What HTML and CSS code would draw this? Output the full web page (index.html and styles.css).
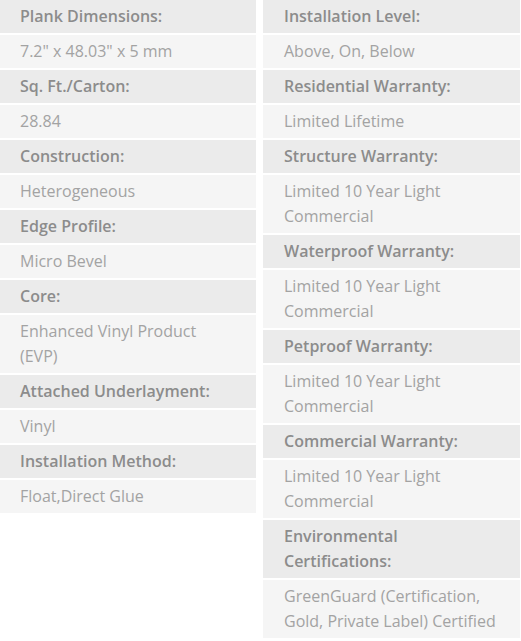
FILE: index.html
```html
<!DOCTYPE html>
<html>
<head>
<meta charset="utf-8">
<link rel="stylesheet" href="styles.css">
</head>
<body>
<div class="specs">
  <div class="col">
    <div class="row label">Plank Dimensions:</div>
    <div class="row value">7.2" x 48.03" x 5 mm</div>
    <div class="row label">Sq. Ft./Carton:</div>
    <div class="row value">28.84</div>
    <div class="row label">Construction:</div>
    <div class="row value">Heterogeneous</div>
    <div class="row label">Edge Profile:</div>
    <div class="row value">Micro Bevel</div>
    <div class="row label">Core:</div>
    <div class="row value">Enhanced Vinyl Product (EVP)</div>
    <div class="row label">Attached Underlayment:</div>
    <div class="row value">Vinyl</div>
    <div class="row label">Installation Method:</div>
    <div class="row value">Float,Direct Glue</div>
  </div>
  <div class="col">
    <div class="row label">Installation Level:</div>
    <div class="row value">Above, On, Below</div>
    <div class="row label">Residential Warranty:</div>
    <div class="row value">Limited Lifetime</div>
    <div class="row label">Structure Warranty:</div>
    <div class="row value">Limited 10 Year Light Commercial</div>
    <div class="row label">Waterproof Warranty:</div>
    <div class="row value">Limited 10 Year Light Commercial</div>
    <div class="row label">Petproof Warranty:</div>
    <div class="row value">Limited 10 Year Light Commercial</div>
    <div class="row label">Commercial Warranty:</div>
    <div class="row value">Limited 10 Year Light Commercial</div>
    <div class="row label">Environmental Certifications:</div>
    <div class="row value">GreenGuard (Certification, Gold, Private Label) Certified</div>
  </div>
</div>
</body>
</html>
```

FILE: styles.css
```css
html, body {
  margin: 0;
  padding: 0;
  background: #ffffff;
}
.specs {
  display: flex;
  gap: 7px;
  align-items: flex-start;
  width: 521px;
  font-family: "Open Sans", "Liberation Sans", sans-serif;
  font-size: 16px;
  line-height: 25px;
}
.col {
  width: 257px;
  display: flex;
  flex-direction: column;
  gap: 2px;
}
.col:first-child {
  width: 256px;
}
.row {
  padding: 4px 20px 4px 20px;
}
.col:last-child .row {
  padding-left: 21px;
  padding-right: 12px;
}
.label {
  background: #ebebeb;
  color: #8c8c8c;
  font-weight: 600;
}
.value {
  background: #f5f5f5;
  color: #a3a3a3;
  font-weight: 400;
}
```
